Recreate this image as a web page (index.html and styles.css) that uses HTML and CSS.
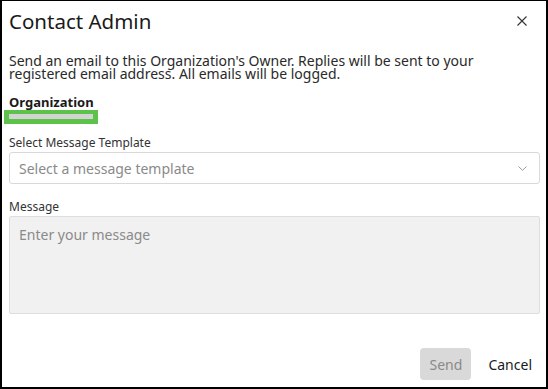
FILE: index.html
```html
<!DOCTYPE html>
<html lang="en">
<head>
    <meta charset="UTF-8">
    <title>Contact Admin</title>
    <link rel="stylesheet" href="styles.css">
</head>
<body>
    <div class="dialog">
        <div class="dialog-header">
            <h1>Contact Admin</h1>
            <button class="close-btn" aria-label="Close">
                <svg width="10" height="10" viewBox="0 0 10 10"><path d="M0.5 0.5L9.5 9.5M9.5 0.5L0.5 9.5" stroke="#333" stroke-width="1.1" fill="none"/></svg>
            </button>
        </div>

        <p class="intro">Send an email to this Organization's Owner. Replies will be sent to your registered email address. All emails will be logged.</p>

        <div class="org-title">Organization</div>
        <div class="org-name"><span class="org-bar"></span></div>

        <div class="field">
            <label>Select Message Template</label>
            <div class="select">
                <span>Select a message template</span>
                <svg width="9" height="5" viewBox="0 0 9 5"><path d="M0.5 0.5L4.5 4.3L8.5 0.5" stroke="#999" stroke-width="1" fill="none"/></svg>
            </div>
        </div>

        <div class="field field-message">
            <label>Message</label>
            <textarea placeholder="Enter your message"></textarea>
        </div>

        <div class="actions">
            <button class="btn-send" disabled>Send</button>
            <button class="btn-cancel">Cancel</button>
        </div>
    </div>
</body>
</html>
```

FILE: styles.css
```css
body {
    margin: 0;
    font-family: "Noto Sans", Arial, sans-serif;
    color: #1a1a1a;
    background: #fff;
}
.dialog {
    box-sizing: border-box;
    width: 548px;
    height: 389px;
    border: 2px solid #000;
    border-top-width: 1px;
    padding: 0 6px 0 7px;
    display: flex;
    flex-direction: column;
}
.dialog-header {
    display: flex;
    justify-content: space-between;
    align-items: flex-start;
    padding-top: 6px;
}
h1 {
    margin: 0;
    font-size: 20.5px;
    font-weight: 400;
    line-height: 28px;
}
.close-btn {
    background: none;
    border: none;
    padding: 0;
    margin: 7px 13px 0 0;
    cursor: pointer;
}
.intro {
    margin: 19px 0 0 0;
    font-size: 14px;
    line-height: 13px;
    color: #2a2a2a;
}
.org-title {
    margin-top: 14px;
    font-size: 13px;
    font-weight: 700;
    line-height: 16px;
}
.org-name {
    width: 94px;
    height: 14px;
    margin-left: -5px;
    background: #5cc24a;
    box-sizing: border-box;
    padding: 4px 5px;
}
.org-bar {
    display: block;
    height: 5px;
    background: #d3d3d3;
}
.field label {
    display: block;
    font-size: 12px;
    line-height: 16px;
    color: #333;
    margin: 11px 0 1px;
}
.field-message label {
    margin-top: 15px;
}
.select {
    box-sizing: border-box;
    height: 32px;
    border: 1px solid #d9d9d9;
    border-radius: 3px;
    padding: 0 12px 0 9px;
    display: flex;
    align-items: center;
    justify-content: space-between;
    font-size: 14px;
    color: #8a8a8a;
}
textarea {
    display: block;
    box-sizing: border-box;
    width: 100%;
    height: 98px;
    border: 1px solid #dedede;
    border-radius: 2px;
    background: #f1f1f1;
    padding: 8px 9px;
    font-family: inherit;
    font-size: 14px;
    resize: none;
}
textarea::placeholder {
    color: #8a8a8a;
}
.actions {
    margin-top: auto;
    margin-bottom: 7px;
    display: flex;
    justify-content: flex-end;
    align-items: center;
    gap: 8px;
}
.btn-send {
    width: 51px;
    height: 32px;
    border: none;
    border-radius: 4px;
    background: #d9d9d9;
    color: #8a8a8a;
    font-family: inherit;
    font-size: 14px;
}
.btn-cancel {
    background: none;
    border: none;
    padding: 0 8px 0 9px;
    height: 32px;
    font-family: inherit;
    font-size: 14px;
    color: #1a1a1a;
}
```
